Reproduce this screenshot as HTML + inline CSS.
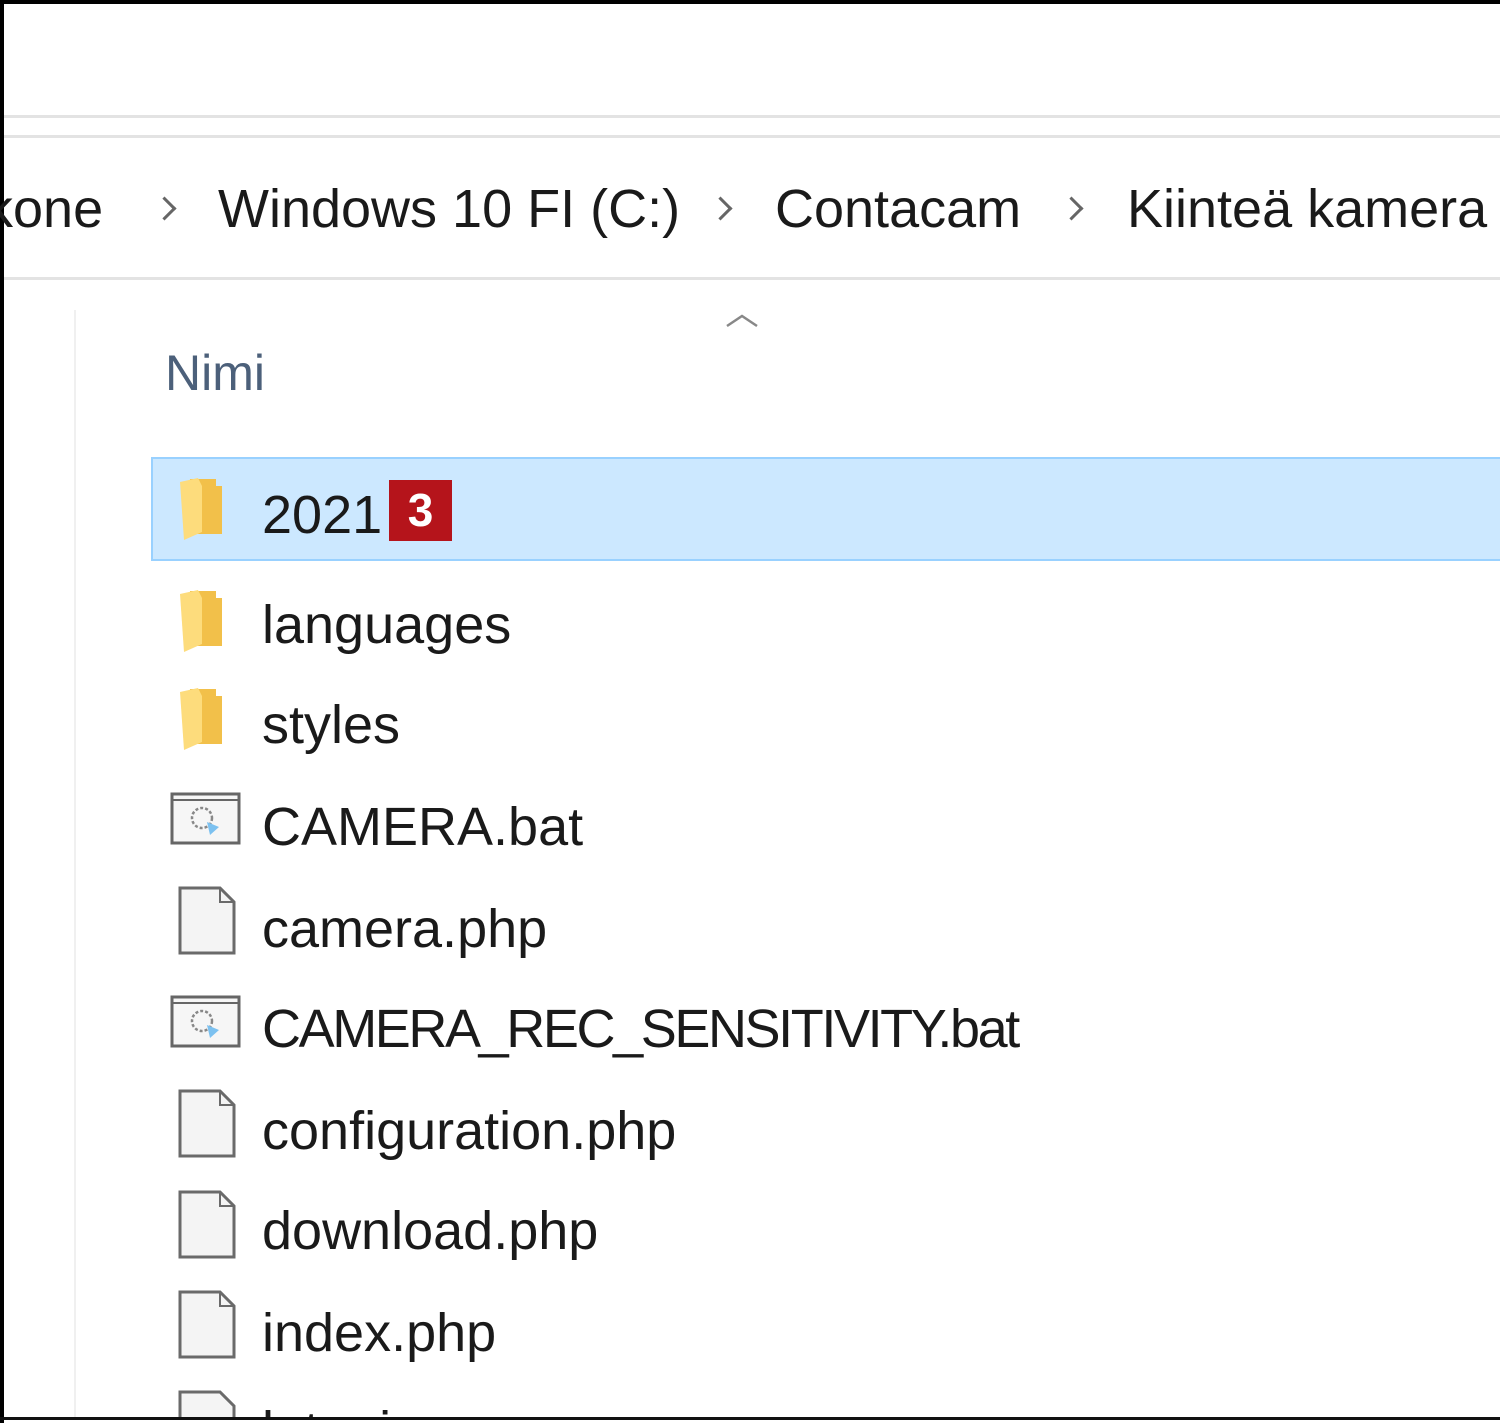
<!DOCTYPE html>
<html><head><meta charset="utf-8"><style>
html,body{margin:0;padding:0;}
body{width:1500px;height:1423px;position:relative;overflow:hidden;background:#fff;font-family:"Liberation Sans",sans-serif;}
.t{position:absolute;font-size:54px;line-height:54px;color:#1a1a1a;white-space:nowrap;}
.hl{position:absolute;left:0;right:0;height:3px;background:#e3e3e3;}
.chev{position:absolute;width:14px;height:14px;border-right:3px solid #666;border-top:3px solid #666;transform:rotate(45deg);}
.ic{position:absolute;}
</style></head><body>
<div style="position:absolute;left:0;top:0;width:1500px;height:4px;background:#000"></div>
<div style="position:absolute;left:0;top:0;width:4px;height:1423px;background:#000"></div>
<div style="position:absolute;left:0;top:1417px;width:1500px;height:3px;background:#111;z-index:5"></div>
<div class="hl" style="top:115px;left:4px"></div>
<div class="hl" style="top:135px;left:4px"></div>
<div class="hl" style="top:277px;left:4px"></div>
<div style="position:absolute;left:74px;top:310px;width:2px;height:1110px;background:#f0f0f0"></div>

<div class="t" style="left:-14px;top:182px">kone</div>
<div class="chev" style="left:156px;top:200px"></div>
<div class="t" style="left:218px;top:182px">Windows 10 FI (C:)</div>
<div class="chev" style="left:712px;top:200px"></div>
<div class="t" style="left:775px;top:182px">Contacam</div>
<div class="chev" style="left:1063px;top:200px"></div>
<div class="t" style="left:1127px;top:182px">Kiinteä kamera</div>

<svg class="ic" style="left:724px;top:312px" width="36" height="18"><path d="M3 14 L18 4 L33 14" fill="none" stroke="#888" stroke-width="2.5"/></svg>
<div class="t" style="left:165px;top:346px;color:#4c607a;font-size:50px">Nimi</div>

<div style="position:absolute;left:151px;top:457px;width:1360px;height:104px;background:#cce8ff;border:2px solid #99d1ff;box-sizing:border-box"></div>

<svg class="ic" style="left:176px;top:476px" width="52" height="66"><path d="M14 3 L40 3 L40 10 L46 10 L46 58 L14 58 Z" fill="#f2c04a"/><path d="M4 6 L22 2 L26 10 L26 56 L8 64 Z" fill="#fddc7c"/></svg>
<svg class="ic" style="left:176px;top:588px" width="52" height="66"><path d="M14 3 L40 3 L40 10 L46 10 L46 58 L14 58 Z" fill="#f2c04a"/><path d="M4 6 L22 2 L26 10 L26 56 L8 64 Z" fill="#fddc7c"/></svg>
<svg class="ic" style="left:176px;top:686px" width="52" height="66"><path d="M14 3 L40 3 L40 10 L46 10 L46 58 L14 58 Z" fill="#f2c04a"/><path d="M4 6 L22 2 L26 10 L26 56 L8 64 Z" fill="#fddc7c"/></svg>

<div class="t" style="left:262px;top:488px">2021</div>
<div style="position:absolute;left:389px;top:480px;width:63px;height:61px;background:#b5141b;color:#fff;font-size:46px;font-weight:bold;line-height:61px;text-align:center;font-family:'Liberation Sans',sans-serif">3</div>
<div class="t" style="left:262px;top:598px">languages</div>
<div class="t" style="left:262px;top:698px">styles</div>

<svg class="ic" style="left:170px;top:792px" width="72" height="54"><rect x="2" y="2" width="67" height="49" fill="#f6f6f6" stroke="#666" stroke-width="3"/><line x1="2" y1="8" x2="69" y2="8" stroke="#666" stroke-width="2"/><circle cx="32" cy="26" r="10" fill="none" stroke="#888" stroke-width="2.5" stroke-dasharray="3 2"/><path d="M37 30 L49 35 L40 43 Z" fill="#7cc1f0"/></svg>
<svg class="ic" style="left:170px;top:995px" width="72" height="54"><rect x="2" y="2" width="67" height="49" fill="#f6f6f6" stroke="#666" stroke-width="3"/><line x1="2" y1="8" x2="69" y2="8" stroke="#666" stroke-width="2"/><circle cx="32" cy="26" r="10" fill="none" stroke="#888" stroke-width="2.5" stroke-dasharray="3 2"/><path d="M37 30 L49 35 L40 43 Z" fill="#7cc1f0"/></svg>

<svg class="ic" style="left:178px;top:886px" width="58" height="70"><path d="M2 2 L42 2 L56 16 L56 67 L2 67 Z" fill="#f4f4f4" stroke="#6a6a6a" stroke-width="3"/><path d="M42 2 L42 16 L56 16" fill="none" stroke="#6a6a6a" stroke-width="2"/></svg>
<svg class="ic" style="left:178px;top:1089px" width="58" height="70"><path d="M2 2 L42 2 L56 16 L56 67 L2 67 Z" fill="#f4f4f4" stroke="#6a6a6a" stroke-width="3"/><path d="M42 2 L42 16 L56 16" fill="none" stroke="#6a6a6a" stroke-width="2"/></svg>
<svg class="ic" style="left:178px;top:1190px" width="58" height="70"><path d="M2 2 L42 2 L56 16 L56 67 L2 67 Z" fill="#f4f4f4" stroke="#6a6a6a" stroke-width="3"/><path d="M42 2 L42 16 L56 16" fill="none" stroke="#6a6a6a" stroke-width="2"/></svg>
<svg class="ic" style="left:178px;top:1290px" width="58" height="70"><path d="M2 2 L42 2 L56 16 L56 67 L2 67 Z" fill="#f4f4f4" stroke="#6a6a6a" stroke-width="3"/><path d="M42 2 L42 16 L56 16" fill="none" stroke="#6a6a6a" stroke-width="2"/></svg>
<svg class="ic" style="left:178px;top:1390px" width="58" height="27"><path d="M2 2 L42 2 L56 16 L56 30 L2 30 Z" fill="#f4f4f4" stroke="#6a6a6a" stroke-width="3"/></svg>

<div class="t" style="left:262px;top:800px">CAMERA.bat</div>
<div class="t" style="left:262px;top:902px">camera.php</div>
<div class="t" style="left:262px;top:1002px;letter-spacing:-2.4px">CAMERA_REC_SENSITIVITY.bat</div>
<div class="t" style="left:262px;top:1104px">configuration.php</div>
<div class="t" style="left:262px;top:1204px">download.php</div>
<div class="t" style="left:262px;top:1306px">index.php</div>
<div class="t" style="left:262px;top:1404px;height:13px;overflow:hidden">lataaja</div>
</body></html>
